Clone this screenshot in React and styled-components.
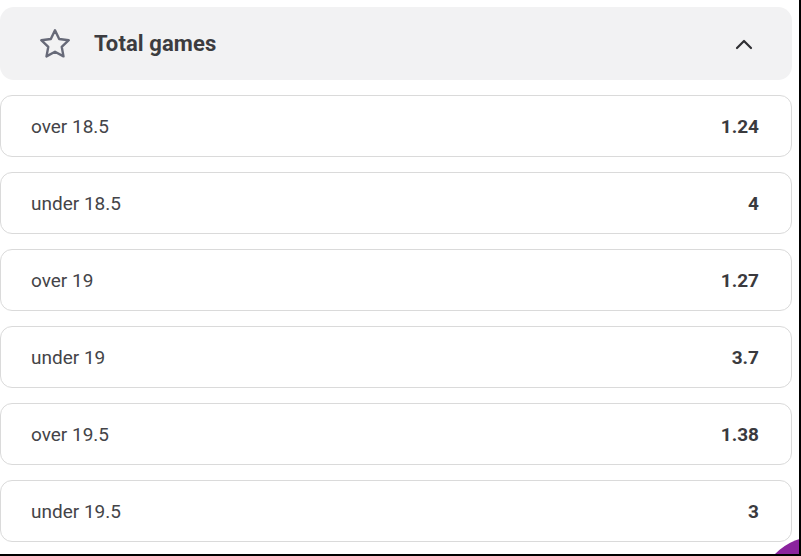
import React from "react";
import styled, { createGlobalStyle } from "styled-components";

const Global = createGlobalStyle`
  html, body { margin: 0; padding: 0; background: #ffffff; }
  body { font-family: Roboto, "Noto Sans", Arial, sans-serif; overflow: hidden; }
  * { box-sizing: border-box; }
`;

const Page = styled.div`
  width: 801px;
  height: 556px;
  position: relative;
  overflow: hidden;
  background: #fff;
`;

const List = styled.div`
  width: 792px;
  padding-top: 7px;
  display: flex;
  flex-direction: column;
  gap: 15px;
`;

const Header = styled.div`
  height: 73px;
  background: #f2f2f3;
  border-radius: 14px;
  display: flex;
  align-items: center;
  padding: 0 39px 0 38px;
`;

const Title = styled.div`
  flex: 1;
  margin-left: 22px;
  font-size: 22px;
  font-weight: 700;
  color: #3c3c40;
  letter-spacing: 0.1px;
`;

const Row = styled.div`
  height: 62px;
  background: #fff;
  border: 1.5px solid #dadada;
  border-radius: 12px;
  display: flex;
  align-items: center;
  justify-content: space-between;
  padding: 0 32px 0 30px;
  font-size: 19px;
  color: #444448;
`;

const Label = styled.span`
  font-weight: 400;
`;

const Odd = styled.span`
  font-weight: 700;
  color: #3a3a3e;
`;

const Fab = styled.div`
  position: absolute;
  left: 758px;
  top: 536px;
  width: 120px;
  height: 120px;
  border-radius: 50%;
  background: #8b249e;
`;

const Frame = styled.div`
  position: absolute;
  inset: 0;
  border-right: 2px solid #000;
  border-bottom: 2px solid #000;
  pointer-events: none;
`;

const StarIcon = () => (
  <svg width="34" height="34" viewBox="0 0 24 24" fill="none" stroke="#676a78" strokeWidth="1.7" strokeLinejoin="round" strokeLinecap="round">
    <path d="M12 2.3l2.95 6.2 6.75.85-4.95 4.68 1.25 6.72L12 17.5l-6 3.25 1.25-6.72L2.3 9.35l6.75-.85z" />
  </svg>
);

const ChevronIcon = () => (
  <svg width="18" height="12" viewBox="0 0 18 12" fill="none" stroke="#2f2f33" strokeWidth="2.2" strokeLinecap="round" strokeLinejoin="round">
    <path d="M2 10l7-7 7 7" />
  </svg>
);

const rows = [
  ["over 18.5", "1.24"],
  ["under 18.5", "4"],
  ["over 19", "1.27"],
  ["under 19", "3.7"],
  ["over 19.5", "1.38"],
  ["under 19.5", "3"],
];

export default function App() {
  return (
    <Page>
      <Global />
      <List>
        <Header>
          <StarIcon />
          <Title>Total games</Title>
          <ChevronIcon />
        </Header>
        {rows.map(([l, o]) => (
          <Row key={l}>
            <Label>{l}</Label>
            <Odd>{o}</Odd>
          </Row>
        ))}
      </List>
      <Fab />
      <Frame />
    </Page>
  );
}
